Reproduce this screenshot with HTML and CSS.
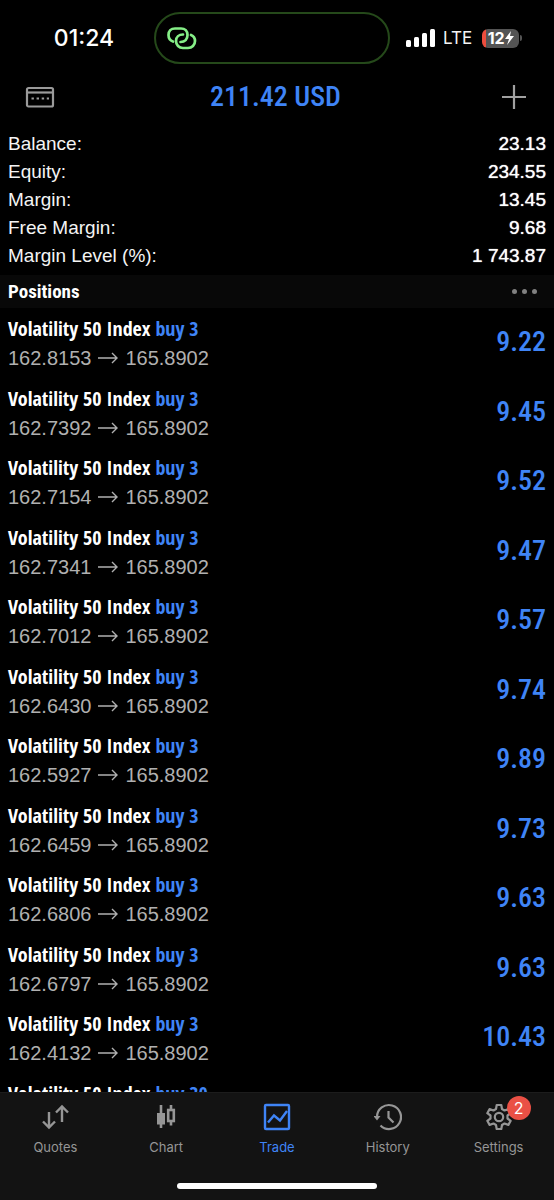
FILE: index.html
```html
<!DOCTYPE html>
<html lang="en">
<head>
<meta charset="utf-8">
<meta name="viewport" content="width=device-width, initial-scale=1">
<title>Trade</title>
<link rel="stylesheet" href="styles.css">
</head>
<body>
<div class="app">

  <!-- status bar -->
  <div class="status">
    <div class="clock">01:24</div>
    <div class="island">
      <svg width="30" height="23" viewBox="0 0 30 23" fill="none" stroke="#85ee87" stroke-width="2.7" stroke-linecap="round">
        <path d="M6 14.500C3 13.500 1.500 11 1.500 8C1.500 4 4 1.500 8 1.500H14C18 1.500 20.500 4 20.500 8C20.500 12 18 15 13.500 15"/>
        <path d="M16 7.500C12 7.500 9 10 9 14C9 18 12 21 16 21H21C25 21 28 18 28 14C28 11 26.500 9 24 8"/>
      </svg>
    </div>
    <div class="signals">
      <svg width="29" height="19" viewBox="0 0 29 19" fill="#fff">
        <rect x="0" y="11" width="5" height="7" rx="1.5"/>
        <rect x="8" y="8" width="5" height="10" rx="1.5"/>
        <rect x="16" y="4" width="5" height="14" rx="1.5"/>
        <rect x="24" y="0" width="5" height="18" rx="1.5"/>
      </svg>
      <span class="lte">LTE</span>
      <span class="battery">
        <span class="level">12<svg width="9" height="14" viewBox="0 0 9 14" fill="#fff"><path d="M6 0L0 8H4L2 14L9 5H5Z"/></svg></span>
        <span class="cap"></span>
      </span>
    </div>
  </div>

  <!-- top bar -->
  <header class="topbar">
    <button class="icon-btn" aria-label="Account">
      <svg width="30" height="22" viewBox="0 0 30 22" fill="none" stroke="#9a9a9a" stroke-width="2.2">
        <rect x="2" y="2" width="26" height="18.500" rx="1.5"/>
        <path d="M2 6.500H28"/>
        <path d="M6.500 12.500H24" stroke-dasharray="2.400 2.700"/>
      </svg>
    </button>
    <h1 class="total">211.42 USD</h1>
    <button class="icon-btn" aria-label="New order">
      <svg width="24" height="24" viewBox="0 0 24 24" stroke="#a0a0a0" stroke-width="2.200"><path d="M12 0V24M0 12H24"/></svg>
    </button>
  </header>

  <dl class="summary">
    <div><dt>Balance:</dt><dd>23.13</dd></div>
    <div><dt>Equity:</dt><dd>234.55</dd></div>
    <div><dt>Margin:</dt><dd>13.45</dd></div>
    <div><dt>Free Margin:</dt><dd>9.68</dd></div>
    <div><dt>Margin Level (%):</dt><dd>1 743.87</dd></div>
  </dl>

  <div class="section">
    <h2>Positions</h2>
    <button class="more" aria-label="More"><i></i><i></i><i></i></button>
  </div>

  <svg class="defs" width="0" height="0">
    <symbol id="arrow" viewBox="0 0 20 12"><path d="M0 6H19M14 1L19 6L14 11" fill="none" stroke="#b0b0b0" stroke-width="1.4"/></symbol>
  </svg>

  <ul class="positions">
    <li><div><h3>Volatility 50 Index <span>buy 3</span></h3><p>162.8153 <svg><use href="#arrow"/></svg> 165.8902</p></div><b>9.22</b></li>
    <li><div><h3>Volatility 50 Index <span>buy 3</span></h3><p>162.7392 <svg><use href="#arrow"/></svg> 165.8902</p></div><b>9.45</b></li>
    <li><div><h3>Volatility 50 Index <span>buy 3</span></h3><p>162.7154 <svg><use href="#arrow"/></svg> 165.8902</p></div><b>9.52</b></li>
    <li><div><h3>Volatility 50 Index <span>buy 3</span></h3><p>162.7341 <svg><use href="#arrow"/></svg> 165.8902</p></div><b>9.47</b></li>
    <li><div><h3>Volatility 50 Index <span>buy 3</span></h3><p>162.7012 <svg><use href="#arrow"/></svg> 165.8902</p></div><b>9.57</b></li>
    <li><div><h3>Volatility 50 Index <span>buy 3</span></h3><p>162.6430 <svg><use href="#arrow"/></svg> 165.8902</p></div><b>9.74</b></li>
    <li><div><h3>Volatility 50 Index <span>buy 3</span></h3><p>162.5927 <svg><use href="#arrow"/></svg> 165.8902</p></div><b>9.89</b></li>
    <li><div><h3>Volatility 50 Index <span>buy 3</span></h3><p>162.6459 <svg><use href="#arrow"/></svg> 165.8902</p></div><b>9.73</b></li>
    <li><div><h3>Volatility 50 Index <span>buy 3</span></h3><p>162.6806 <svg><use href="#arrow"/></svg> 165.8902</p></div><b>9.63</b></li>
    <li><div><h3>Volatility 50 Index <span>buy 3</span></h3><p>162.6797 <svg><use href="#arrow"/></svg> 165.8902</p></div><b>9.63</b></li>
    <li><div><h3>Volatility 50 Index <span>buy 3</span></h3><p>162.4132 <svg><use href="#arrow"/></svg> 165.8902</p></div><b>10.43</b></li>
    <li><div><h3>Volatility 50 Index <span>buy 30</span></h3></div></li>
  </ul>

  <!-- bottom tabs -->
  <footer class="bottom">
    <nav class="tabs">
      <a href="#quotes">
        <svg width="28" height="28" viewBox="0 0 28 28" fill="none" stroke="#969696" stroke-width="2.4"><path d="M8 9V25M2 18.5L8 24.5L14 18.5M21 19V3M15 9.500L21 3.500L27 9.500"/></svg>
        Quotes
      </a>
      <a href="#chart">
        <svg width="28" height="28" viewBox="0 0 28 28" fill="none" stroke="#969696" stroke-width="2.600"><path d="M9 2V25M19 2V7M19 18V22.500"/><rect x="5" y="10" width="8" height="11.500" fill="#969696" stroke="none"/><rect x="16.200" y="7" width="5.600" height="11"/></svg>
        Chart
      </a>
      <a href="#trade" class="active">
        <svg width="28" height="28" viewBox="0 0 28 28" fill="none" stroke="#3f84f6" stroke-width="2.4"><rect x="2" y="2" width="24" height="24" rx="1"/><path d="M5 19.500L11 12.500L17 17.500L24 8"/></svg>
        Trade
      </a>
      <a href="#history">
        <svg width="28" height="28" viewBox="0 0 28 28" fill="none" stroke="#969696" stroke-width="2.2"><path d="M3 14A12 12 0 1 1 6.500 22.500"/><path d="M-0.500 13H6.500L3 17.500Z" fill="#969696" stroke="none"/><path d="M14.500 8V14.500L19.500 19.500"/></svg>
        History
      </a>
      <a href="#settings">
        <span class="gear">
          <svg width="28" height="28" viewBox="0 0 28 28" fill="none" stroke="#969696" stroke-width="2.2" stroke-linejoin="round"><path d="M11.700 2H16.300L17 6L19.500 7.500L23.400 6.100L25.700 10.200L22.500 12.500V15.500L25.700 17.800L23.400 21.900L19.500 20.500L17 22L16.300 26H11.700L11 22L8.500 20.500L4.600 21.900L2.300 17.800L5.500 15.500V12.500L2.300 10.200L4.600 6.100L8.500 7.500L11 6Z"/><circle cx="14" cy="14" r="4.200"/></svg>
          <em class="badge">2</em>
        </span>
        Settings
      </a>
    </nav>
    <div class="home"></div>
  </footer>

</div>
</body>
</html>
```
FILE: styles.css
```css
* {
  box-sizing: border-box;
}

body, h1, h2, h3, p, ul, dl, dd {
  margin: 0;
  padding: 0;
}

body {
  background: #000;
  color: #f4f4f4;
  font-family: "Liberation Sans", Arial, sans-serif;
}

button {
  background: none;
  border: 0;
  padding: 0;
}

svg {
  display: block;
}

.app {
  display: flex;
  flex-direction: column;
  height: 100vh;
}

/* status bar */
.status {
  display: grid;
  grid-template-columns: 1fr 236px 1fr;
  align-items: center;
  padding: 12px 10px 0 0;
  font-family: Inter, sans-serif;
}

.clock {
  padding-left: 14px;
  text-align: center;
  font-size: 23px;
  font-weight: 500;
  color: #fff;
}

.island {
  display: flex;
  align-items: center;
  height: 52px;
  padding-left: 11px;
  border: 2px solid #25491a;
  border-radius: 26px;
}

.signals {
  display: flex;
  align-items: center;
  padding-left: 16px;
}

.lte {
  margin-left: 8px;
  font-size: 17px;
}

.battery {
  display: flex;
  align-items: center;
  gap: 1px;
  margin-left: 10px;
}

.level {
  display: flex;
  align-items: center;
  justify-content: center;
  width: 37px;
  height: 19px;
  border-radius: 6px;
  background: linear-gradient(to right, #ec4d3d 4px, #545454 4px);
  color: #fff;
  font-size: 16px;
  font-weight: 700;
}

.cap {
  width: 2px;
  height: 6px;
  border-radius: 0 2px 2px 0;
  background: #545454;
}

/* top bar */
.topbar {
  display: grid;
  grid-template-columns: 1fr auto 1fr;
  align-items: center;
  height: 66px;
  padding: 0 28px 0 25px;
}

.icon-btn {
  display: flex;
}

.icon-btn:last-child {
  justify-self: end;
}

.total {
  color: #3f84f6;
  font-family: "Roboto Condensed", "Open Sans Condensed", sans-serif;
  font-size: 28px;
  font-weight: 500;
  line-height: 40px;
}

/* account summary */
.summary {
  padding: 0 8px 5px;
  font-size: 19px;
  line-height: 28px;
}

.summary div {
  display: flex;
  justify-content: space-between;
}

.summary dd {
  color: #fff;
  text-shadow: 0 0 1px #fff;
}

.section {
  display: flex;
  align-items: center;
  justify-content: space-between;
  height: 33px;
  padding: 0 17px 0 8px;
  background: #080808;
}

.section h2 {
  font-family: "Roboto Condensed", sans-serif;
  font-size: 19px;
  font-weight: 700;
  color: #fff;
}

.more {
  display: flex;
  gap: 5px;
}

.more i {
  width: 5px;
  height: 5px;
  border-radius: 50%;
  background: #808080;
}

/* positions */
.positions {
  flex: 1;
  min-height: 0;
  overflow: hidden;
  padding: 0 8px;
  list-style: none;
}

.positions li {
  display: flex;
  justify-content: space-between;
  height: 70px;
  padding-top: 6px;
}

.positions li:nth-child(even) {
  height: 69px;
}

.positions h3 {
  color: #fff;
  font-family: "Open Sans Condensed", "Roboto Condensed", sans-serif;
  font-size: 20px;
  font-weight: 700;
  line-height: 30px;
}

.positions h3 span {
  color: #3f84f6;
}

.positions p {
  display: flex;
  align-items: center;
  gap: 7px;
  color: #b0b0b0;
  font-size: 20px;
  line-height: 28px;
}

.positions p svg {
  width: 20px;
  height: 12px;
}

.positions b {
  color: #3f84f6;
  font-family: "Roboto Condensed", "Open Sans Condensed", sans-serif;
  font-size: 28px;
  font-weight: 500;
  line-height: 56px;
}

.defs {
  position: absolute;
}

/* bottom tabs */
.bottom {
  height: 108px;
  border-top: 1px solid #1c1c1c;
  background: #131313;
}

.tabs {
  display: flex;
  padding-top: 10px;
}

.tabs a {
  display: flex;
  flex: 1;
  flex-direction: column;
  align-items: center;
  gap: 8px;
  color: #969696;
  font-family: Inter, sans-serif;
  font-size: 13px;
  line-height: 16px;
  text-decoration: none;
}

.tabs .active {
  color: #3f84f6;
}

.gear {
  position: relative;
}

.badge {
  position: absolute;
  top: -7px;
  right: -18px;
  width: 24px;
  height: 24px;
  border-radius: 50%;
  background: #ea5045;
  color: #fff;
  font-size: 16px;
  font-style: normal;
  line-height: 24px;
  text-align: center;
}

.home {
  width: 36%;
  height: 6px;
  margin: 28px auto 0;
  border-radius: 3px;
  background: #fff;
}
```
